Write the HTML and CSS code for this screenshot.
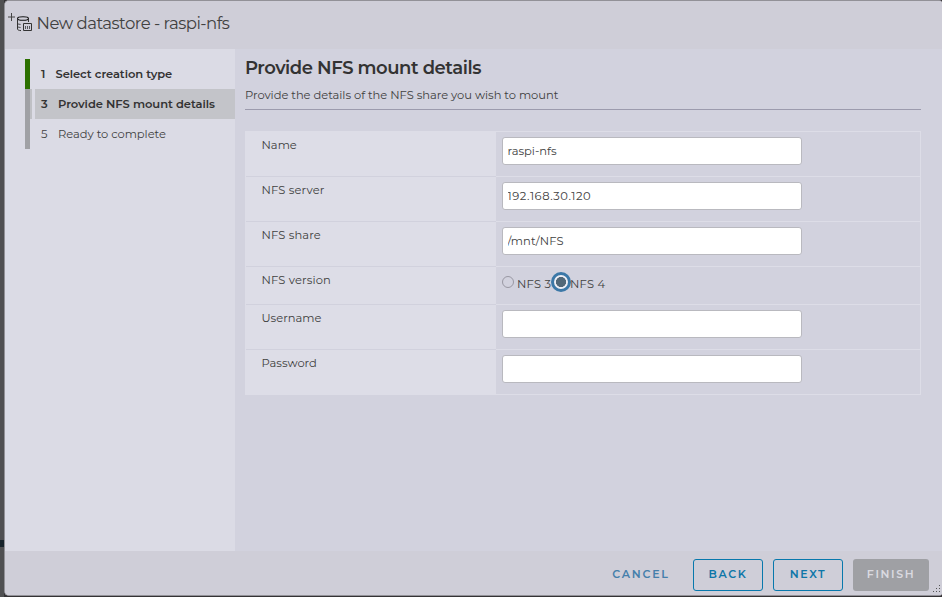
FILE: index.html
```html
<!DOCTYPE html>
<html lang="en">
<head>
<meta charset="utf-8">
<title>New datastore - raspi-nfs</title>
<link rel="stylesheet" href="styles.css">
</head>
<body>
<div class="dialog">
  <header class="titlebar">
    <svg class="ds-icon" width="26" height="22" viewBox="0 0 26 22" fill="none" stroke="#333">
      <path d="M0 5h7M3.500 1v8" stroke="#444"/>
      <ellipse cx="15" cy="6.500" rx="5.500" ry="1.800" stroke="#111" stroke-width="1.100"/>
      <path d="M9.500 6.500v10.500c0 1 1.500 1.500 3.500 1.600M20.500 6.500v3.500M9.500 11.500c.5 .6 1.500 .8 3 .9M9.500 14.500c.5 .6 1.500 .9 3 1" stroke-width="1"/>
      <path d="M15.500 11.500h8v7h-8z"/>
      <path d="M17.500 14v3M19.500 14v3M21.500 14v3" stroke="#55555a"/>
    </svg>
    <h1 class="title">New datastore - raspi-nfs</h1>
  </header>
  <div class="content">
    <nav class="steps">
      <div class="step done"><span class="num">1</span><span>Select creation type</span></div>
      <div class="step current"><span class="num">3</span><span>Provide NFS mount details</span></div>
      <div class="step"><span class="num">5</span><span>Ready to complete</span></div>
    </nav>
    <main class="page">
      <h2 class="heading">Provide NFS mount details</h2>
      <p class="description">Provide the details of the NFS share you wish to mount</p>
      <form class="form">
        <div class="row"><label>Name</label><div class="cell"><input type="text" value="raspi-nfs"></div></div>
        <div class="row"><label class="wide">NFS server</label><div class="cell"><input class="ip" type="text" value="192.168.30.120"></div></div>
        <div class="row"><label class="wide">NFS share</label><div class="cell"><input class="share" type="text" value="/mnt/NFS"></div></div>
        <div class="row short"><label class="wide">NFS version</label><div class="cell"><span class="radio"></span><span class="opt">NFS 3</span><span class="radio on"></span><span class="opt">NFS 4</span></div></div>
        <div class="row"><label>Username</label><div class="cell"><input type="text"></div></div>
        <div class="row"><label>Password</label><div class="cell"><input type="password"></div></div>
      </form>
    </main>
  </div>
  <footer class="footer">
    <button class="btn link">CANCEL</button>
    <button class="btn">BACK</button>
    <button class="btn">NEXT</button>
    <button class="btn finish">FINISH</button>
    <svg class="grip" width="8" height="8" viewBox="0 0 8 8" fill="#555"><path d="M6 0h1v1H6zM3 3h1v1H3zM6 3h1v1H6zM0 6h1v1H0zM3 6h1v1H3zM6 6h1v1H6z"/></svg>
  </footer>
</div>
</body>
</html>
```
FILE: styles.css
```css
* { box-sizing: border-box; }
body {
  margin: 0;
  width: 942px;
  height: 597px;
  padding: 0 0 1px 4px;
  overflow: hidden;
  background:
    linear-gradient(#17232b, #17232b) 0 540px / 4px 7px no-repeat,
    linear-gradient(90deg, #505052 0 4px, #343235 4px);
  font-family: Montserrat, Inter, "Liberation Sans", sans-serif;
  font-size: 11.5px;
  color: #414141;
}
.dialog {
  position: relative;
  display: flex;
  flex-direction: column;
  height: 596px;
  border: 1px solid #929197;
  border-right: 0;
  border-radius: 5px 3px 3px 5px;
  background: #d2d2de;
  overflow: hidden;
}
.titlebar {
  flex: 0 0 48px;
  display: flex;
  background: #cfced8;
}
.ds-icon { margin: 11px 0 0 3px; }
.title {
  margin: 11px 0 0 2.5px;
  font-size: 16.5px;
  line-height: 23px;
  font-weight: 400;
  letter-spacing: -.51px;
  white-space: nowrap;
}
.content { flex: 0 0 502px; display: flex; }
.steps {
  flex: 0 0 230px;
  padding: 10px 0 0 20px;
  background: #dbdbe5;
}
.step {
  height: 30px;
  padding-left: 11px;
  border-left: 5px solid #a0a1a5;
  line-height: 30px;
  display: flex;
  gap: 10px;
  white-space: nowrap;
  letter-spacing: -.04px;
}
.step .num { width: 7px; }
.step.done { border-color: #2c7000; font-weight: 600; color: #333; gap: 7.5px; letter-spacing: -.06px; }
.step.current {
  font-weight: 600;
  color: #333;
  background: linear-gradient(90deg, #bfc0c5 0 2px, #dbdbe5 2px 5px, #c3c4c9 5px);
}
.page { flex: 1; padding: 6px 21px 0 10px; }
.heading {
  margin: 0;
  font-size: 18px;
  line-height: 27px;
  font-weight: 600;
  color: #333;
  letter-spacing: -.45px;
}
.description {
  margin: 0 0 21px;
  height: 28px;
  line-height: 26px;
  letter-spacing: -.04px;
  border-bottom: 1px solid #9c9bad;
}
.form { border: 1px solid #dddde7; height: 264px; }
.row { display: flex; height: 45px; }
.row.short { height: 38px; }
.row:last-child { height: 44px; }
.row label {
  width: 250px;
  padding: 5px 0 0 15.5px;
  line-height: 16px;
  background: #dddde7;
  border-bottom: 1px solid #d1d1dd;
}
.row label.wide { letter-spacing: .13px; }
.cell {
  flex: 1;
  display: flex;
  padding: 5px 0 0 6px;
  border-bottom: 1px solid #dddde7;
}
.row:last-child label, .row:last-child .cell { border-bottom: 0; }
input {
  width: 300px;
  height: 28px;
  padding: 0 5px 0 4.5px;
  border: 1px solid #b9b9bf;
  border-radius: 3px;
  background: #fff;
  font: inherit;
  color: #414141;
  outline: 0;
}
.ip { letter-spacing: .57px; }
.share { letter-spacing: .13px; }
.radio {
  width: 12px;
  height: 12px;
  margin: 4px 3px 0 0;
  border: 1px solid #9998a3;
  border-radius: 50%;
}
.radio.on {
  width: 20px;
  height: 20px;
  margin: 0 -1px 0 0;
  border: 3px solid #3c78a7;
  background: radial-gradient(circle, #526878 0 4.8px, #eeeef4 5.3px);
}
.opt { line-height: 24px; width: 34px; white-space: nowrap; letter-spacing: .2px; }
.footer {
  flex: 1;
  display: flex;
  justify-content: flex-end;
  padding: 8px 13px 0 0;
  gap: 10px;
  background: #cfced8;
}
.btn {
  width: 70px;
  height: 32px;
  padding: 0 0 2px;
  border: 1px solid #0878ac;
  border-radius: 3px;
  background: transparent;
  font: 600 11px Montserrat, Inter, "Liberation Sans", sans-serif;
  letter-spacing: 1.6px;
  color: #0d76a8;
}
.btn.link { border: 0; width: 84px; letter-spacing: 1.8px; color: #457fab; }
.btn.finish { width: 76px; border: 0; background: #9fa0a4; color: #dadae0; }
.grip { position: absolute; right: 1px; bottom: 2px; }
```
